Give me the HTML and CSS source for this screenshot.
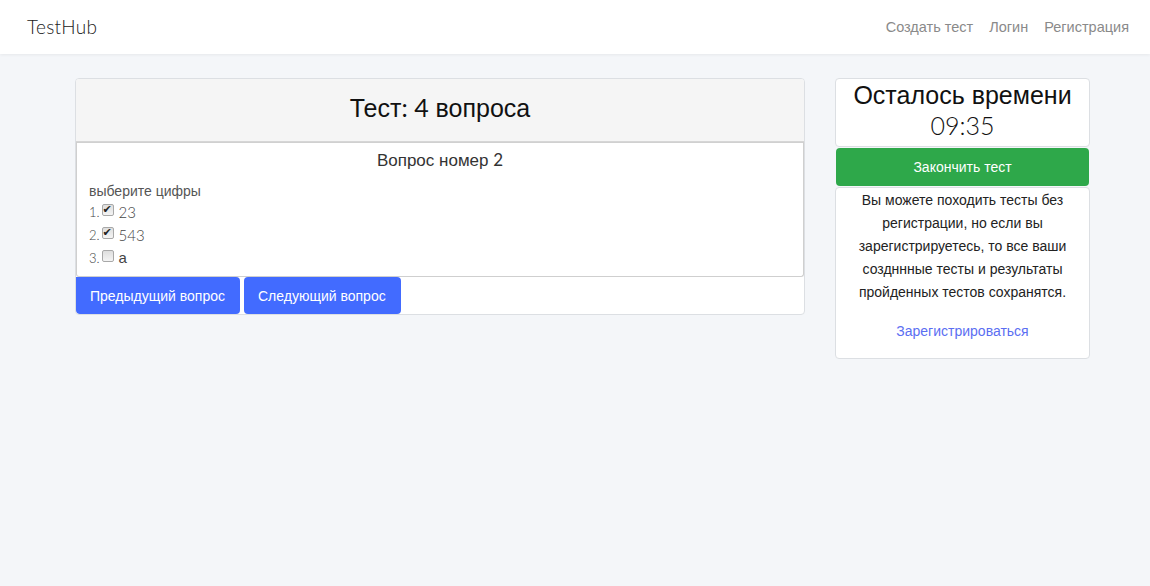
FILE: index.html
```html
<!DOCTYPE html>
<html lang="ru">
<head>
<meta charset="utf-8">
<title>TestHub</title>
<link rel="stylesheet" href="styles.css">
</head>
<body>
<nav class="navbar">
  <a class="brand">TestHub</a>
  <div class="nav-links">
    <a class="nav-link">Создать тест</a>
    <a class="nav-link">Логин</a>
    <a class="nav-link">Регистрация</a>
  </div>
</nav>
<main class="page">
  <section class="test-card">
    <header class="test-head"><h1 class="test-title">Тест<span class="num">: 4</span> вопроса</h1></header>
    <div class="question">
      <div class="q-title">Вопрос номер <span class="num">2</span></div>
      <div class="q-text">выберите цифры</div>
      <ol class="answers">
        <li><span class="num idx">1.</span><input class="check" type="checkbox" checked><span class="num val">23</span></li>
        <li><span class="num idx">2.</span><input class="check" type="checkbox" checked><span class="num val">543</span></li>
        <li><span class="num idx">3.</span><input class="check" type="checkbox"><span class="val">a</span></li>
      </ol>
    </div>
    <div class="q-nav">
      <button class="btn btn-blue btn-prev">Предыдущий вопрос</button>
      <button class="btn btn-blue">Следующий вопрос</button>
    </div>
  </section>
  <aside class="side">
    <div class="timer">
      <div class="timer-label">Осталось времени</div>
      <div class="timer-value num">09:35</div>
    </div>
    <button class="btn btn-green">Закончить тест</button>
    <div class="info">
      <p class="info-text">Вы можете походить тесты без регистрации, но если вы зарегистрируетесь, то все ваши создннные тесты и результаты пройденных тестов сохранятся.</p>
      <a class="info-link">Зарегистрироваться</a>
    </div>
  </aside>
</main>
</body>
</html>
```
FILE: styles.css
```css
* { box-sizing: border-box; }
body {
  margin: 0;
  background: #f4f6f9;
  font-family: "Liberation Sans", Arial, sans-serif;
  font-size: 14px;
  color: #333;
  min-height: 586px;
}
.num { font-family: Lato, "Liberation Sans", sans-serif; font-weight: 300; }
.navbar {
  height: 54px;
  background: #fff;
  display: flex;
  align-items: center;
  justify-content: space-between;
  padding: 0 21px 0 27px;
  box-shadow: 0 1px 3px rgba(0,0,0,0.06);
}
.brand {
  font-family: Lato, "Liberation Sans", sans-serif;
  font-weight: 300;
  font-size: 19px;
  color: #222;
  letter-spacing: 0.3px;
  padding-bottom: 2px;
}
.nav-links { display: flex; gap: 16px; }
.nav-link { color: #8a8a8a; font-size: 14.5px; }
.page {
  display: flex;
  align-items: flex-start;
  gap: 30px;
  padding: 24px 0 0 75px;
}
.test-card {
  width: 730px;
  background: #fff;
  border: 1px solid #dcdfe3;
  border-radius: 4px;
  overflow: hidden;
}
.test-head {
  height: 63px;
  background: #f5f5f5;
  border-bottom: 1px solid #d6d6d6;
  display: flex;
  align-items: center;
  justify-content: center;
  padding-bottom: 6px;
}
.test-title {
  margin: 0;
  font-size: 25px;
  font-weight: 400;
  color: #111;
}
.test-title .num { font-weight: 400; }
.question {
  border: 1px solid #cfcfcf;
  border-top: 1px solid #d0d0d0;
  border-radius: 0 0 3px 3px;
  padding: 7px 12px 2px;
  height: 135px;
}
.q-title {
  text-align: center;
  font-size: 17px;
  color: #333;
  line-height: 20px;
}
.q-title .num { font-weight: 400; }
.q-text {
  margin-top: 11px;
  color: #555;
  line-height: 18px;
}
.answers {
  list-style: none;
  margin: 0;
  padding: 0;
}
.answers li {
  display: flex;
  align-items: center;
  height: 23px;
  color: #555;
}
.answers .idx { font-size: 13px; color: #444; }
.check {
  appearance: none;
  -webkit-appearance: none;
  margin: 0 5px 4px 2px;
  width: 12px;
  height: 12px;
  border: 1px solid #a8a8a8;
  border-radius: 2px;
  background: linear-gradient(#dedede, #f4f4f4);
  position: relative;
}
.check:checked::after {
  content: "✔";
  position: absolute;
  left: 0;
  top: -2px;
  font-size: 11px;
  line-height: 14px;
  color: #222;
  font-family: "DejaVu Sans", sans-serif;
}
.answers .val { font-size: 15px; color: #444; }
.q-nav {
  display: flex;
  gap: 4px;
  height: 37px;
}
.btn {
  border: none;
  border-radius: 4px;
  color: #fff;
  font-family: "Liberation Sans", Arial, sans-serif;
  font-size: 14px;
  cursor: pointer;
}
.btn-blue {
  background: #426bff;
  height: 37px;
  padding: 0 15px 0 14px;
}
.btn-prev { border-top-left-radius: 0; }
.side {
  width: 255px;
  display: flex;
  flex-direction: column;
  gap: 1px;
}
.timer {
  background: #fff;
  border: 1px solid #dcdfe3;
  border-radius: 4px;
  height: 69px;
  text-align: center;
  color: #111;
  font-size: 25px;
  line-height: 30px;
  padding-top: 1px;
}
.timer-value { font-weight: 300; }
.btn-green {
  background: #2ea84a;
  height: 38px;
  margin: 0 1px;
  width: calc(100% - 2px);
}
.info {
  background: #fff;
  border: 1px solid #dcdfe3;
  border-radius: 4px;
  height: 172px;
  padding: 1px 14px 0;
  text-align: center;
}
.info-text {
  margin: 0;
  font-size: 14px;
  line-height: 23px;
  color: #222;
}
.info-link {
  display: block;
  margin-top: 19px;
  color: #5b6ef2;
  font-size: 14px;
}
```
